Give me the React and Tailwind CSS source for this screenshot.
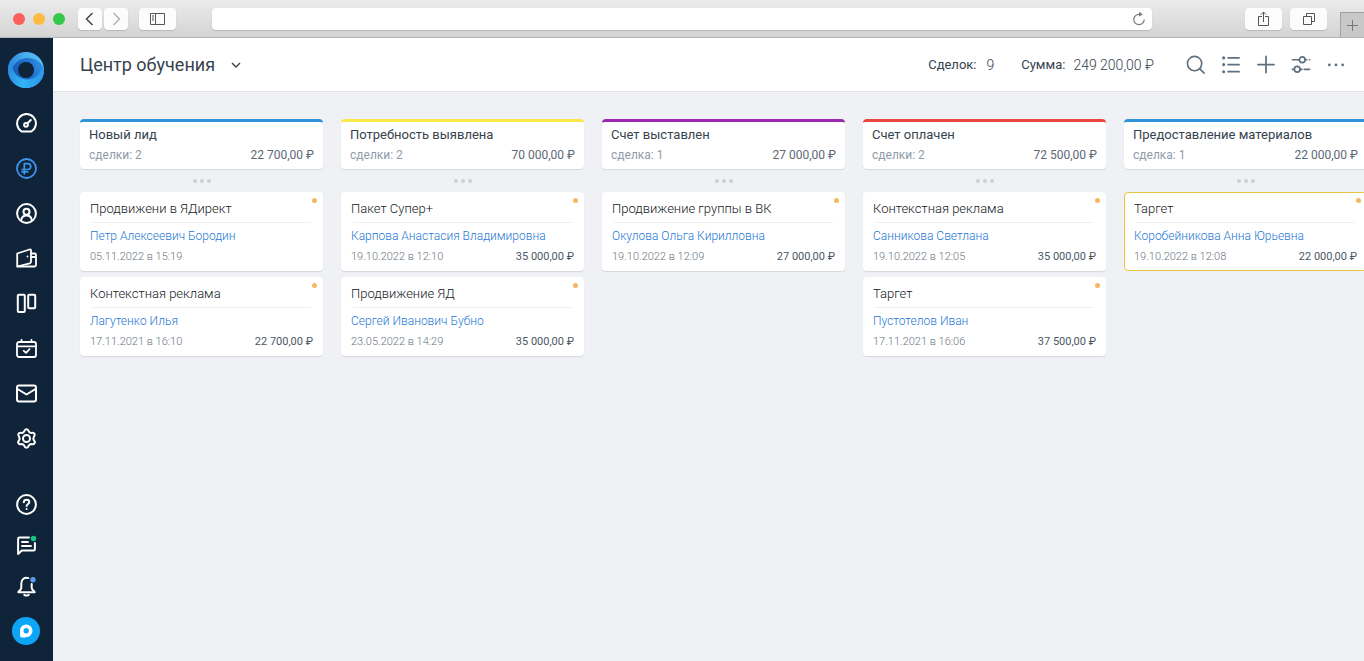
import clsx from 'clsx';

const columns = [
  {
    title: 'Новый лид',
    count: 'сделки: 2',
    total: '22 700,00 ₽',
    bar: 'border-[#2f93da]',
    deals: [
      { title: 'Продвижени в ЯДирект', client: 'Петр Алексеевич Бородин', date: '05.11.2022 в 15:19' },
      { title: 'Контекстная реклама', client: 'Лагутенко Илья', date: '17.11.2021 в 16:10', sum: '22 700,00 ₽' },
    ],
  },
  {
    title: 'Потребность выявлена',
    count: 'сделки: 2',
    total: '70 000,00 ₽',
    bar: 'border-[#f9e84a]',
    deals: [
      { title: 'Пакет Супер+', client: 'Карпова Анастасия Владимировна', date: '19.10.2022 в 12:10', sum: '35 000,00 ₽' },
      { title: 'Продвижение ЯД', client: 'Сергей Иванович Бубно', date: '23.05.2022 в 14:29', sum: '35 000,00 ₽' },
    ],
  },
  {
    title: 'Счет выставлен',
    count: 'сделка: 1',
    total: '27 000,00 ₽',
    bar: 'border-[#9c27b0]',
    deals: [
      { title: 'Продвижение группы в ВК', client: 'Окулова Ольга Кирилловна', date: '19.10.2022 в 12:09', sum: '27 000,00 ₽' },
    ],
  },
  {
    title: 'Счет оплачен',
    count: 'сделки: 2',
    total: '72 500,00 ₽',
    bar: 'border-[#e8483f]',
    deals: [
      { title: 'Контекстная реклама', client: 'Санникова Светлана', date: '19.10.2022 в 12:05', sum: '35 000,00 ₽' },
      { title: 'Таргет', client: 'Пустотелов Иван', date: '17.11.2021 в 16:06', sum: '37 500,00 ₽' },
    ],
  },
  {
    title: 'Предоставление материалов',
    count: 'сделка: 1',
    total: '22 000,00 ₽',
    bar: 'border-[#2f93da]',
    deals: [
      { title: 'Таргет', client: 'Коробейникова Анна Юрьевна', date: '19.10.2022 в 12:08', sum: '22 000,00 ₽', active: true },
    ],
  },
];

function Icon({ children, className = 'size-[21px]' }) {
  return (
    <svg
      viewBox="0 0 21 21"
      className={className}
      fill="none"
      stroke="currentColor"
      strokeWidth="2"
      strokeLinecap="round"
      strokeLinejoin="round"
      aria-hidden="true"
    >
      {children}
    </svg>
  );
}

const menu = [
  {
    label: 'Рабочий стол',
    icon: (
      <>
        <path d="M5.6 18.5a9.4 9.4 0 1 1 9.8 0z" />
        <circle cx="10" cy="11.8" r="1.9" />
        <path d="M11.5 10.3 14.8 7" />
      </>
    ),
  },
  {
    label: 'Сделки',
    active: true,
    icon: (
      <>
        <circle cx="10.5" cy="10.5" r="9.5" strokeWidth="1.8" />
        <path d="M8.3 15.8V5.6h4a3 3 0 0 1 0 5.9H6M6 13.8h5.8" strokeWidth="1.7" />
      </>
    ),
  },
  {
    label: 'Контакты',
    icon: (
      <>
        <circle cx="10.5" cy="10.5" r="9.4" />
        <circle cx="10.5" cy="8.7" r="3" />
        <path d="M5.2 17.2c.5-3 2.5-4.6 5.3-4.6s4.8 1.6 5.3 4.6" />
      </>
    ),
  },
  {
    label: 'Финансы',
    icon: (
      <g strokeWidth="1.8">
        <path d="M1.2 5.5 13.5 1.5c1-.3 1.5.2 1.5 1v11c0 1-.5 1.5-1.3 1.8L1.2 18.5z" />
        <path d="M15.5 5.5h3c1 0 1.5.5 1.5 1.5v10c0 1-.5 1.5-1.5 1.5h-17M15.5 9H20" />
        <path d="M11.5 8.5v.1" />
      </g>
    ),
  },
  {
    label: 'Проекты',
    icon: (
      <>
        <rect x="1.8" y="1.8" width="7" height="17.2" rx="1" />
        <rect x="12.2" y="1.8" width="7" height="13.4" rx="1" />
      </>
    ),
  },
  {
    label: 'Календарь',
    icon: (
      <g strokeWidth="1.8">
        <rect x="1" y="4" width="19" height="15" rx="2" />
        <path d="M1.5 8.3h18M5.5 1.8v2M15.5 1.8v2M7.8 12.8l2.2 2 3.5-3.6" />
      </g>
    ),
  },
  {
    label: 'Почта',
    icon: (
      <>
        <rect x="1" y="2.5" width="19" height="16" rx="2" />
        <path d="m1.5 6 9 5.5 9-5.5" />
      </>
    ),
  },
  {
    label: 'Настройки',
    icon: (
      <g transform="translate(10.5 10.5)">
        <path d="M-2.2-7.3C-1.5-9.9 1.5-9.9 2.2-7.3Q3.2-5.5 5.2-5.6C7.8-6.3 9.3-3.7 7.4-1.8Q6.4 0 7.4 1.8C9.3 3.7 7.8 6.3 5.2 5.6Q3.2 5.5 2.2 7.3C1.5 9.9-1.5 9.9-2.2 7.3Q-3.2 5.5-5.2 5.6C-7.8 6.3-9.3 3.7-7.4 1.8Q-6.4 0-7.4-1.8C-9.3-3.7-7.8-6.3-5.2-5.6Q-3.2-5.5-2.2-7.3z" />
        <circle r="3.5" />
      </g>
    ),
  },
];

const helpers = [
  {
    label: 'Помощь',
    icon: (
      <>
        <circle cx="10.5" cy="10.5" r="9.4" />
        <path d="M7.8 8.2c.1-1.6 1.2-2.5 2.8-2.5s2.7 1 2.7 2.3c0 1.9-2.7 2-2.7 4M10.6 15v.1" />
      </>
    ),
  },
  {
    label: 'Сообщения',
    icon: (
      <>
        <path d="M13 2.5H3.5c-.9 0-1.4.5-1.4 1.4v15l3.7-3.3h11.7c.9 0 1.4-.5 1.4-1.4V8" />
        <path d="M6 7h6M6 11h9" strokeWidth="1.8" />
        <circle cx="17.5" cy="3.5" r="2.7" fill="#12c981" stroke="none" />
      </>
    ),
  },
  {
    label: 'Уведомления',
    icon: (
      <>
        <path d="M12.5 2.1C8.5 1 5.3 3.3 5.3 7.5v4.3c0 2-2 2.7-3 4.4h16.4c-1-1.7-3-2.4-3-4.4V8" />
        <path d="M8.3 18.8q2.2 1.4 4.4 0" />
        <circle cx="17" cy="3.8" r="2.7" fill="#5a9cf0" stroke="none" />
      </>
    ),
  },
];

function Logo() {
  return (
    <svg viewBox="0 0 36 36" className="size-9" aria-hidden="true">
      <defs>
        <linearGradient id="outer" x1="0" y1="0.4" x2="0.9" y2="0.2">
          <stop offset="0" stopColor="#2583d8" />
          <stop offset="0.6" stopColor="#4aaeee" />
          <stop offset="1" stopColor="#54bdf5" />
        </linearGradient>
        <linearGradient id="inner" x1="0" y1="0.6" x2="1" y2="0.3">
          <stop offset="0" stopColor="#1757b8" />
          <stop offset="0.55" stopColor="#2170cc" />
          <stop offset="1" stopColor="#2f93e4" />
        </linearGradient>
        <linearGradient id="lower" x1="0" y1="0.2" x2="1" y2="0.4">
          <stop offset="0" stopColor="#2987de" />
          <stop offset="0.5" stopColor="#33b4f5" />
          <stop offset="1" stopColor="#2b9aea" />
        </linearGradient>
      </defs>
      <circle cx="18" cy="18" r="18" fill="url(#outer)" />
      <path d="M3 26C2 15 9 6 20 6c8 0 14 5 16 11-1 9-8 16-18 17C10 34 4 31 3 26z" fill="url(#inner)" />
      <path d="M0 18C0 12 2 8 5 6c-3 9 1 17 8 20 9 4 19 0 22-12 4 11-5 22-17 22C8 36 0 28 0 18z" fill="url(#lower)" />
      <circle cx="18" cy="18" r="8" fill="#0f2438" />
    </svg>
  );
}

function Browser() {
  const button = 'flex h-[22px] items-center justify-center rounded bg-[#fcfcfc] shadow-[0_1px_1px_#b9b9b9]';
  return (
    <div className="flex h-[38px] shrink-0 items-center border-b border-[#b4b4b4] bg-linear-to-b from-[#ebebeb] to-[#d4d4d4] pl-[13px]">
      <div className="flex gap-2">
        <span className="size-3 rounded-full bg-[#fc605b]" />
        <span className="size-3 rounded-full bg-[#fdbc40]" />
        <span className="size-3 rounded-full bg-[#34c84a]" />
      </div>
      <div className="ml-[13px] flex gap-0.5">
        <button aria-label="Назад" className={clsx(button, 'w-6 text-[#444]')}>
          <svg viewBox="0 0 24 22" className="w-6" fill="none" stroke="currentColor" strokeWidth="1.5"><path d="m14.5 5-6 6 6 6" /></svg>
        </button>
        <button aria-label="Вперед" className={clsx(button, 'w-6 text-[#b3b3b3]')}>
          <svg viewBox="0 0 24 22" className="w-6" fill="none" stroke="currentColor" strokeWidth="1.5"><path d="m9.5 5 6 6-6 6" /></svg>
        </button>
      </div>
      <button aria-label="Боковая панель" className={clsx(button, 'ml-[11px] w-[37px] text-[#555]')}>
        <svg viewBox="0 0 16 12" className="h-3 w-4" fill="none" stroke="currentColor"><path d="M.5.5h14v11H.5zM5.5.5v11M2 3h2M2 5h2M2 7h2" /></svg>
      </button>
      <div className="relative ml-9 flex-1">
        <input aria-label="Адрес" className="block h-[22px] w-full rounded bg-white px-3 text-xs shadow-[0_1px_1px_#b9b9b9] outline-none" />
        <button aria-label="Обновить" className="absolute top-1 right-1.5 text-[#777]">
          <svg viewBox="0 0 14 14" className="size-3.5" fill="none" stroke="currentColor" strokeWidth="1.2">
            <path d="M8 2.3H7A5.2 5.2 0 1 0 12.2 7.5" />
            <path d="M7-.2 10.8 2.3 7 4.8z" fill="currentColor" stroke="none" />
          </svg>
        </button>
      </div>
      <div className="ml-[93px] flex gap-2 text-[#555]">
        <button aria-label="Поделиться" className={clsx(button, 'w-[37px]')}>
          <svg viewBox="0 0 12 16" className="h-4 w-3" fill="none" stroke="currentColor"><path d="M4 5.5H.5v9h10v-9H7M5.5 11V1M3 3.5 5.5 1 8 3.5" /></svg>
        </button>
        <button aria-label="Все вкладки" className={clsx(button, 'w-[37px]')}>
          <svg viewBox="0 0 12 12" className="size-3" fill="none" stroke="currentColor"><path d="M.5 3.5h8v8h-8zM3.5 3V.5h8v8H9" /></svg>
        </button>
      </div>
      <button aria-label="Новая вкладка" className="ml-[13px] flex h-[25px] w-6 items-center justify-center self-end border-t border-l border-[#a3a3a3] bg-[#c8c8c8] text-[#777]">
        <svg viewBox="0 0 11 11" className="size-[11px]" fill="none" stroke="currentColor"><path d="M5.5 0v11M0 5.5h11" /></svg>
      </button>
    </div>
  );
}

function Sidebar() {
  return (
    <nav className="flex w-[53px] shrink-0 flex-col items-center bg-[#0f2438] pt-3.5 pr-px pb-4 text-white">
      <a href="#" aria-label="Главная">
        <Logo />
      </a>
      <div className="mt-[13px] flex flex-col">
        {menu.map((item) => (
          <a
            key={item.label}
            href="#"
            aria-label={item.label}
            className={clsx('flex h-[45px] items-center', item.active && 'text-[#3d94ee]')}
          >
            <Icon>{item.icon}</Icon>
          </a>
        ))}
      </div>
      <div className="mt-auto flex flex-col items-center gap-5">
        {helpers.map((item) => (
          <a key={item.label} href="#" aria-label={item.label}>
            <Icon>{item.icon}</Icon>
          </a>
        ))}
        <button aria-label="Чат" className="flex size-7 items-center justify-center rounded-full bg-[#0da5f5]">
          <svg viewBox="0 0 14 14" className="size-3.5" fill="none" stroke="white" strokeWidth="3.6">
            <path d="M2 7v4.500c0 .8.200 1 1 1h4" strokeWidth="2" />
            <circle cx="7.2" cy="6.8" r="4.5" />
          </svg>
        </button>
      </div>
    </nav>
  );
}

function Toolbar() {
  const button = 'flex h-9 w-[35px] items-center justify-center';
  return (
    <header className="flex h-[54px] shrink-0 items-center border-b border-[#dfe3e8] bg-white pr-[11px] pl-[27px] text-[#36424d]">
      <button className="flex items-center gap-4 text-lg">
        <h1>Центр обучения</h1>
        <svg viewBox="0 0 10 6" className="h-1.5 w-2.5" fill="none" stroke="currentColor" strokeWidth="1.4"><path d="m1 1 4 4 4-4" /></svg>
      </button>
      <div className="ml-auto flex gap-[27px] text-[13px]/5">
        <span className="flex gap-2.5">Сделок: <span className="text-sm/5 font-light">9</span></span>
        <span className="flex gap-2">Сумма: <span className="text-sm/5 font-light">249 200,00 ₽</span></span>
      </div>
      <div className="ml-6 flex text-[#5f6f7d]">
        <button aria-label="Поиск" className={button}>
          <Icon className="size-5"><g strokeWidth="1.7"><circle cx="9" cy="9" r="7.5" /><path d="m14.500 14.500 4.500 4.500" /></g></Icon>
        </button>
        <button aria-label="Список" className={button}>
          <Icon className="size-5">
            <path d="M7.5 3H19M7.5 10H19M7.5 17.5H19" strokeWidth="1.8" />
            <path d="M2.8 3v.1M2.8 10v.1M2.8 17.5v.1" strokeWidth="3.2" />
          </Icon>
        </button>
        <button aria-label="Добавить" className={button}>
          <Icon className="size-5"><path d="M10.5 1.5v17M2 10h17" strokeWidth="1.8" /></Icon>
        </button>
        <button aria-label="Фильтр" className={button}>
          <Icon className="size-5">
            <g strokeWidth="1.8">
              <path d="M1.5 5h7M15 5h1.5M19.4 5h.2M1.500 15H3M10 15h1.500M14 15h5.500" />
              <circle cx="11.8" cy="5" r="3" />
              <circle cx="6.5" cy="15" r="3" />
            </g>
          </Icon>
        </button>
        <button aria-label="Ещё" className={button}>
          <Icon className="size-5"><path d="M3.5 10.3v.1M10.5 10.3v.1M17.5 10.3v.1" strokeWidth="2.8" /></Icon>
        </button>
      </div>
    </header>
  );
}

function Deal({ deal }) {
  return (
    <article
      className={clsx(
        'relative rounded border bg-white px-[9px] pt-1.5 pb-1',
        deal.active ? 'border-[#ebc53c]' : 'border-transparent shadow-[0_1px_1px_#d5d8dc]',
      )}
    >
      <span className="absolute top-[5px] right-[5px] size-[5px] rounded-full bg-[#f5b860]" />
      <h3 className="text-[13px]/5 font-light text-[#14191e]">{deal.title}</h3>
      <hr className="mx-0.5 mt-[3px] border-[#eef0f2]" />
      <a href="#" className="mt-[3px] block text-xs/5 font-light text-[#1f78d4]">{deal.client}</a>
      <div className="mt-0.5 flex justify-between text-[11px]/[18px]">
        <span className="font-light text-[#6c7682]">{deal.date}</span>
        <span className="text-[#4b5764]">{deal.sum}</span>
      </div>
    </article>
  );
}

function Column({ column }) {
  return (
    <section className="w-[243px] shrink-0">
      <div className={clsx('h-[50px] rounded border-t-[3px] bg-white px-[9px] pt-[3px] shadow-[0_1px_1px_#d5d8dc]', column.bar)}>
        <h2 className="text-[13px]/5 text-[#36424d]">{column.title}</h2>
        <div className="flex justify-between text-xs/5 text-[#8f9bab]">
          <span>{column.count}</span>
          <span className="text-[#5c6874]">{column.total}</span>
        </div>
      </div>
      <button aria-label="Действия" className="flex h-[23px] w-full items-center justify-center gap-[3px]">
        <span className="size-1 rounded-full bg-[#ccd0d4]" />
        <span className="size-1 rounded-full bg-[#ccd0d4]" />
        <span className="size-1 rounded-full bg-[#ccd0d4]" />
      </button>
      <div className="flex flex-col gap-1.5">
        {column.deals.map((deal) => (
          <Deal key={deal.title} deal={deal} />
        ))}
      </div>
    </section>
  );
}

export default function App() {
  return (
    <div className="flex h-screen flex-col overflow-hidden bg-white font-['Roboto','Noto_Sans',sans-serif]">
      <Browser />
      <div className="flex min-h-0 flex-1">
        <Sidebar />
        <div className="flex min-w-0 flex-1 flex-col bg-[#eff1f5]">
          <Toolbar />
          <main className="flex flex-1 gap-[18px] overflow-hidden pt-[27px] pl-[27px]">
            {columns.map((column) => (
              <Column key={column.title} column={column} />
            ))}
          </main>
        </div>
      </div>
    </div>
  );
}
